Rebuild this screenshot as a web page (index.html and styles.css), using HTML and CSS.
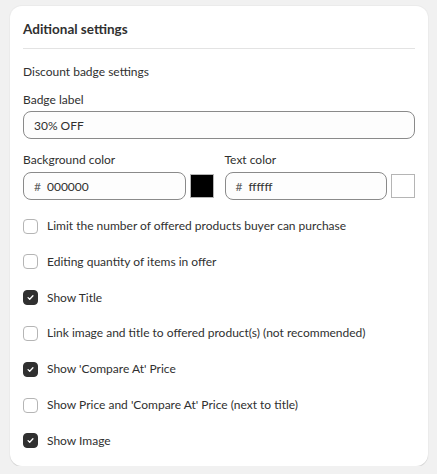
FILE: index.html
```html
<!DOCTYPE html>
<html>
<head>
<meta charset="utf-8">
<link rel="stylesheet" href="styles.css">
</head>
<body>
<div class="card">
  <h2 class="title">Aditional settings</h2>
  <div class="divider"></div>
  <div class="subhead">Discount badge settings</div>
  <label class="label">Badge label</label>
  <div class="input"><span class="val">30% OFF</span></div>
  <div class="colors">
    <div class="colorcol">
      <label class="label">Background color</label>
      <div class="colorrow">
        <div class="input"><span class="hash">#</span><span class="val">000000</span></div>
        <div class="swatch black"></div>
      </div>
    </div>
    <div class="colorcol">
      <label class="label">Text color</label>
      <div class="colorrow">
        <div class="input"><span class="hash">#</span><span class="val">ffffff</span></div>
        <div class="swatch white"></div>
      </div>
    </div>
  </div>
  <div class="checks">
    <div class="check"><span class="box"></span><span>Limit the number of offered products buyer can purchase</span></div>
    <div class="check"><span class="box"></span><span>Editing quantity of items in offer</span></div>
    <div class="check"><span class="box on"><svg viewBox="0 0 16 16" width="16" height="16"><path d="M5 8.2l2 2 4-4.4" fill="none" stroke="#fff" stroke-width="1.6" stroke-linecap="round" stroke-linejoin="round"/></svg></span><span>Show Title</span></div>
    <div class="check"><span class="box"></span><span>Link image and title to offered product(s) (not recommended)</span></div>
    <div class="check"><span class="box on"><svg viewBox="0 0 16 16" width="16" height="16"><path d="M5 8.2l2 2 4-4.4" fill="none" stroke="#fff" stroke-width="1.6" stroke-linecap="round" stroke-linejoin="round"/></svg></span><span>Show 'Compare At' Price</span></div>
    <div class="check"><span class="box"></span><span>Show Price and 'Compare At' Price (next to title)</span></div>
    <div class="check"><span class="box on"><svg viewBox="0 0 16 16" width="16" height="16"><path d="M5 8.2l2 2 4-4.4" fill="none" stroke="#fff" stroke-width="1.6" stroke-linecap="round" stroke-linejoin="round"/></svg></span><span>Show Image</span></div>
  </div>
</div>
</body>
</html>
```

FILE: styles.css
```css
html, body { margin: 0; padding: 0; }
body {
  background: #f1f1f1;
  font-family: "Lato", "Noto Sans", sans-serif;
  font-size: 12px;
  color: #303030;
  padding: 6px 9px 0 10px;
}
.card {
  background: #fff;
  border-radius: 12px;
  box-shadow: 0 1px 0 #d4d4d4, 0 0 0 1px #ebebeb;
  padding: 14px 13px 14px 13px;
  height: 432px;
}
.title {
  margin: 0;
  font-size: 13.5px;
  font-weight: 700;
  line-height: 18px;
  color: #303030;
}
.divider { height: 1px; background: #e3e3e3; margin: 10px 0 14px; }
.subhead { line-height: 18px; margin-bottom: 11px; }
.label { display: block; line-height: 16px; margin-bottom: 3px; }
.colorcol .label { margin-bottom: 4px; }
.input {
  height: 26px;
  border: 1px solid #8a8a8a;
  border-radius: 8px;
  background: #fdfdfd;
  display: flex;
  align-items: center;
  padding: 0 10px;
  flex: 1;
  min-width: 0;
}
.hash { color: #616161; margin-right: 6px; }
.colors { display: flex; gap: 11px; margin-top: 13px; }
.colorcol { flex: 1; }
.colorrow { display: flex; gap: 4px; align-items: center; }
.swatch { width: 22px; height: 22px; border: 1px solid #b5b5b5; flex: none; }
.swatch.black { background: #000; }
.swatch.white { background: #fff; }
.checks { margin-top: 17px; display: flex; flex-direction: column; gap: 17.83px; }
.check { display: flex; align-items: center; gap: 9px; line-height: 18px; }
.box {
  width: 13px; height: 13px;
  border: 1px solid #b5b5b5;
  border-radius: 4px;
  background: #fff;
  display: flex; align-items: center; justify-content: center;
  flex: none;
}
.box.on { background: #303030; border-color: #303030; }
.box svg { width: 13px; height: 13px; }
```
